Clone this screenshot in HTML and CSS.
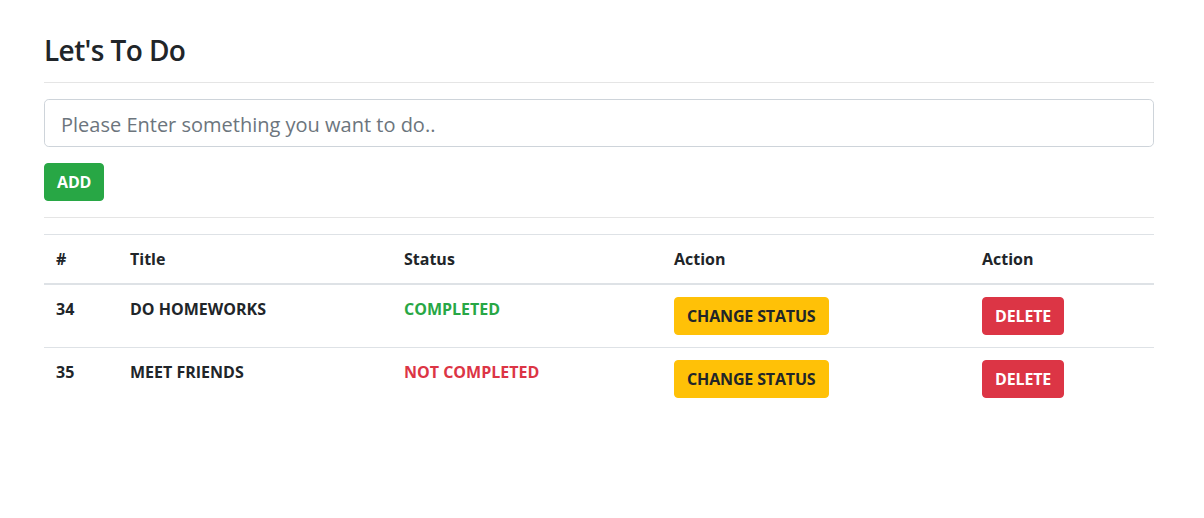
FILE: index.html
```html
<!DOCTYPE html>
<html lang="en">
<head>
<meta charset="utf-8">
<title>Let's To Do</title>
<link rel="stylesheet" href="styles.css">
</head>
<body>
<div class="container">
  <h3 class="title">Let's To Do</h3>
  <hr class="rule rule-top">
  <input class="todo-input" type="text" placeholder="Please Enter something you want to do..">
  <button class="btn btn-add">ADD</button>
  <hr class="rule">
  <table class="todo-table">
    <thead>
      <tr>
        <th class="c-num">#</th>
        <th class="c-title">Title</th>
        <th class="c-status">Status</th>
        <th class="c-action">Action</th>
        <th class="c-action2">Action</th>
      </tr>
    </thead>
    <tbody>
      <tr>
        <td>34</td>
        <td>DO HOMEWORKS</td>
        <td class="done">COMPLETED</td>
        <td><button class="btn btn-warn">CHANGE STATUS</button></td>
        <td><button class="btn btn-del">DELETE</button></td>
      </tr>
      <tr>
        <td>35</td>
        <td>MEET FRIENDS</td>
        <td class="notdone">NOT COMPLETED</td>
        <td><button class="btn btn-warn">CHANGE STATUS</button></td>
        <td><button class="btn btn-del">DELETE</button></td>
      </tr>
    </tbody>
  </table>
</div>
</body>
</html>
```
FILE: styles.css
```css
* { box-sizing: border-box; }
body {
  margin: 0;
  background: #fff;
  color: #212529;
  font-family: "Open Sans", "Noto Sans", sans-serif;
  font-size: 16px;
  line-height: 1.5;
}
.container {
  width: 1110px;
  margin-left: 44px;
  display: flex;
  flex-direction: column;
  align-items: flex-start;
}
.title {
  margin: 34px 0 0;
  font-size: 28px;
  font-weight: 600;
  letter-spacing: -0.6px;
  line-height: 1.2;
}
.rule {
  width: 100%;
  margin: 16px 0;
  border: 0;
  border-top: 1px solid rgba(0,0,0,0.1);
}
.rule-top { margin-top: 14px; }
.todo-input {
  width: 100%;
  height: 48px;
  padding: 10px 16px 6px;
  font: inherit;
  font-size: 20px;
  color: #495057;
  border: 1px solid #ced4da;
  border-radius: 4.8px;
  outline: none;
}
.todo-input::placeholder { color: #6c757d; }
.btn {
  font: inherit;
  font-weight: 700;
  height: 38px;
  padding: 6px 12px;
  border: 1px solid transparent;
  border-radius: 4px;
  line-height: 1.5;
  letter-spacing: -0.15px;
  cursor: pointer;
}
.btn-add {
  margin-top: 16px;
  background: #28a745;
  border-color: #28a745;
  color: #fff;
}
.btn-warn {
  background: #ffc107;
  border-color: #ffc107;
  color: #212529;
}
.btn-del {
  background: #dc3545;
  border-color: #dc3545;
  color: #fff;
}
.todo-table {
  width: 100%;
  border-collapse: collapse;
  font-weight: 700;
}
.todo-table th,
.todo-table td {
  padding: 12px;
  text-align: left;
  vertical-align: top;
  border-top: 1px solid #dee2e6;
}
.todo-table thead th {
  vertical-align: bottom;
  border-bottom: 2px solid #dee2e6;
}
.c-num { width: 74px; }
.c-title { width: 274px; }
.c-status { width: 270px; }
.c-action { width: 308px; }
.c-action2 { width: 184px; }
.done { color: #28a745; }
.notdone { color: #dc3545; }
```
